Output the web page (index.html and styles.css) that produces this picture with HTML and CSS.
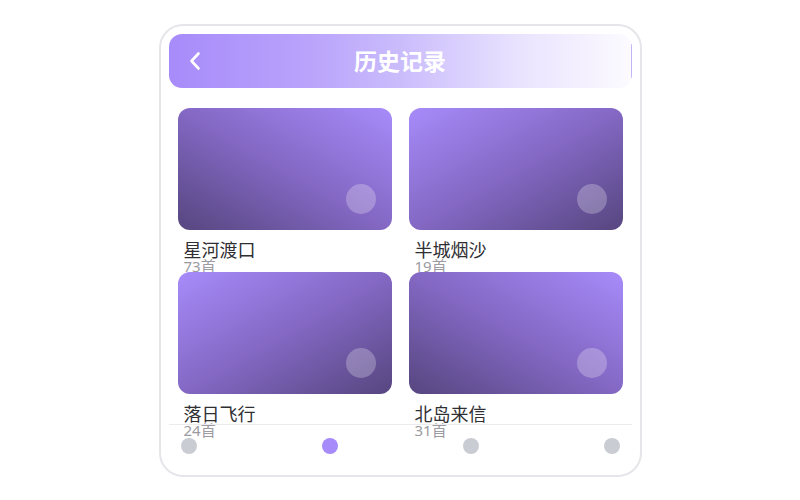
FILE: index.html
```html
<!DOCTYPE html>
<html lang="zh">
<head>
<meta charset="utf-8">
<title>历史记录</title>
<link rel="stylesheet" href="styles.css">
</head>
<body>
<div class="phone">
  <header class="topbar">
    <div class="back">
      <svg width="20" height="20" viewBox="0 0 20 20"><path d="M13.5 2.5 L6.5 10 L13.5 17.5" fill="none" stroke="#fff" stroke-width="2.6" stroke-linecap="round" stroke-linejoin="round"/></svg>
    </div>
    <h1 class="title">历史记录</h1>
    <div></div>
  </header>
  <main class="list">
    <div class="item">
      <div class="cover cover-tr"><span class="dot-play"></span></div>
      <div class="name">星河渡口</div>
      <div class="count">73首</div>
    </div>
    <div class="item">
      <div class="cover cover-tl"><span class="dot-play"></span></div>
      <div class="name">半城烟沙</div>
      <div class="count">19首</div>
    </div>
    <div class="item">
      <div class="cover cover-tl"><span class="dot-play"></span></div>
      <div class="name">落日飞行</div>
      <div class="count">24首</div>
    </div>
    <div class="item">
      <div class="cover cover-tr"><span class="dot-play"></span></div>
      <div class="name">北岛来信</div>
      <div class="count">31首</div>
    </div>
  </main>
  <nav class="tabs">
    <span class="tab"></span>
    <span class="tab active"></span>
    <span class="tab"></span>
    <span class="tab"></span>
  </nav>
</div>
</body>
</html>
```
FILE: styles.css
```css
html, body {
  margin: 0;
  padding: 0;
  background: #fff;
}
body {
  width: 800px;
  height: 500px;
  display: flex;
  align-items: center;
  justify-content: center;
  font-family: "Noto Sans", "Noto Sans CJK SC", sans-serif;
}
.phone {
  box-sizing: border-box;
  width: 483px;
  height: 453px;
  border: 2px solid #e6e6ea;
  border-radius: 24px;
  padding: 8px;
  display: flex;
  flex-direction: column;
  background: #fff;
}
.topbar {
  box-sizing: border-box;
  height: 54px;
  flex: none;
  border-radius: 13px;
  background:
    linear-gradient(#c3b4f8, #c3b4f8) right center / 1px 34px no-repeat,
    linear-gradient(90deg, #a78bfa 0%, #b9a3fb 30%, #cabcfc 50%, #e9e2fe 75%, #fcfbff 100%);
  display: grid;
  grid-template-columns: 1fr auto 1fr;
  align-items: center;
  padding: 0 16px;
}
.back {
  display: flex;
  align-items: center;
}
.back svg {
  display: block;
}
.title {
  margin: 0;
  font-family: "Noto Sans CJK SC", sans-serif;
  font-size: 23px;
  font-weight: 700;
  color: #fff;
  line-height: 1;
}
.list {
  flex: none;
  height: 316px;
  margin-top: 20px;
  padding: 0 9px;
  display: grid;
  grid-template-columns: 214px 214px;
  grid-auto-rows: 164px;
  column-gap: 17px;
  align-content: start;
}
.item {
  min-width: 0;
}
.cover {
  box-sizing: border-box;
  height: 122px;
  border-radius: 12px;
  display: flex;
  align-items: flex-end;
  justify-content: flex-end;
  padding: 16px;
  position: relative;
  z-index: 1;
}
.cover-tr {
  background: linear-gradient(to bottom left, #a78bfa 0%, #8468c4 50%, #56467f 100%);
}
.cover-tl {
  background: linear-gradient(to bottom right, #a78bfa 0%, #8468c4 50%, #56467f 100%);
}
.dot-play {
  width: 30px;
  height: 30px;
  border-radius: 50%;
  background: rgba(255, 255, 255, 0.25);
}
.name {
  margin-top: 10px;
  padding-left: 6px;
  font-family: "Noto Sans CJK SC", sans-serif;
  font-size: 18px;
  line-height: 18px;
  color: #2f2f33;
}
.count {
  padding-left: 6px;
  font-size: 15px;
  line-height: 17px;
  color: #9b9ba1;
}
.tabs {
  flex: none;
  border-top: 1px solid #ececf0;
  padding: 13px 12px;
  display: flex;
  justify-content: space-between;
}
.tab {
  width: 16px;
  height: 16px;
  border-radius: 50%;
  background: #c9ccd2;
}
.tab.active {
  background: #a78bfa;
}
```
